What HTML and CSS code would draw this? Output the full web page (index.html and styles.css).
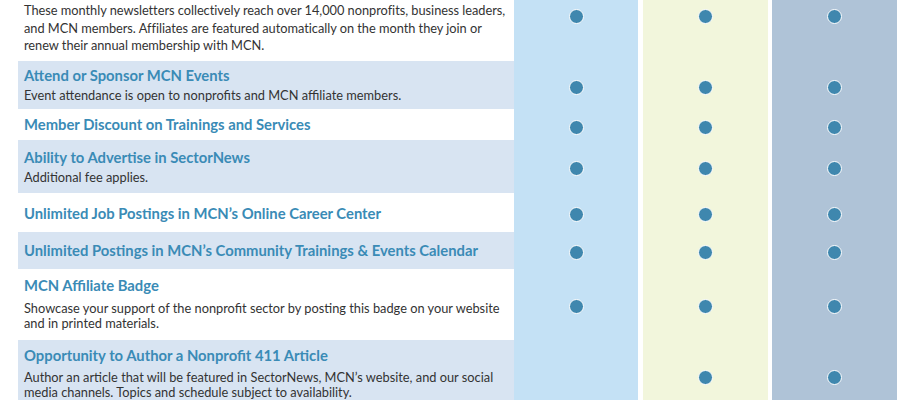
FILE: index.html
```html
<!DOCTYPE html>
<html lang="en">
<head>
<meta charset="utf-8">
<title>MCN Affiliate Benefits</title>
<link rel="stylesheet" href="styles.css">
</head>
<body>
<div class="table">
  <div class="row r1">
    <div class="feature">
      <p class="desc">These monthly newsletters collectively reach over 14,000 nonprofits, business leaders, and MCN members. Affiliates are featured automatically on the month they join or renew their annual membership with MCN.</p>
    </div>
    <div class="cell c1"><span class="dot"></span></div>
    <div class="cell c2"><span class="dot"></span></div>
    <div class="cell c3"><span class="dot"></span></div>
  </div>
  <div class="row shaded r2">
    <div class="feature">
      <h3 class="title">Attend or Sponsor MCN Events</h3>
      <p class="desc">Event attendance is open to nonprofits and MCN affiliate members.</p>
    </div>
    <div class="cell c1"><span class="dot"></span></div>
    <div class="cell c2"><span class="dot"></span></div>
    <div class="cell c3"><span class="dot"></span></div>
  </div>
  <div class="row r3">
    <div class="feature">
      <h3 class="title">Member Discount on Trainings and Services</h3>
    </div>
    <div class="cell c1"><span class="dot"></span></div>
    <div class="cell c2"><span class="dot"></span></div>
    <div class="cell c3"><span class="dot"></span></div>
  </div>
  <div class="row shaded r4">
    <div class="feature">
      <h3 class="title">Ability to Advertise in SectorNews</h3>
      <p class="desc">Additional fee applies.</p>
    </div>
    <div class="cell c1"><span class="dot"></span></div>
    <div class="cell c2"><span class="dot"></span></div>
    <div class="cell c3"><span class="dot"></span></div>
  </div>
  <div class="row r5">
    <div class="feature">
      <h3 class="title">Unlimited Job Postings in MCN’s Online Career Center</h3>
    </div>
    <div class="cell c1"><span class="dot"></span></div>
    <div class="cell c2"><span class="dot"></span></div>
    <div class="cell c3"><span class="dot"></span></div>
  </div>
  <div class="row shaded r6">
    <div class="feature">
      <h3 class="title">Unlimited Postings in MCN’s Community Trainings &amp; Events Calendar</h3>
    </div>
    <div class="cell c1"><span class="dot"></span></div>
    <div class="cell c2"><span class="dot"></span></div>
    <div class="cell c3"><span class="dot"></span></div>
  </div>
  <div class="row r7">
    <div class="feature">
      <h3 class="title">MCN Affiliate Badge</h3>
      <p class="desc tight">Showcase your support of the nonprofit sector by posting this badge on your website and in printed materials.</p>
    </div>
    <div class="cell c1"><span class="dot"></span></div>
    <div class="cell c2"><span class="dot"></span></div>
    <div class="cell c3"><span class="dot"></span></div>
  </div>
  <div class="row shaded r8">
    <div class="feature">
      <h3 class="title">Opportunity to Author a Nonprofit 411 Article</h3>
      <p class="desc tight">Author an article that will be featured in SectorNews, MCN’s website, and our social media channels. Topics and schedule subject to availability.</p>
    </div>
    <div class="cell c1"></div>
    <div class="cell c2"><span class="dot"></span></div>
    <div class="cell c3"><span class="dot"></span></div>
  </div>
</div>
</body>
</html>
```

FILE: styles.css
```css
html, body {
  margin: 0;
  padding: 0;
  background: #ffffff;
}

body {
  font-family: Lato, "Open Sans", "Liberation Sans", sans-serif;
  color: #333333;
  height: 400px;
  overflow: hidden;
}

.table {
  padding-left: 18px;
  display: flex;
  flex-direction: column;
}

.row {
  display: grid;
  grid-template-columns: 496px 124px 130px 129px;
}

.feature {
  padding: 5px 2px 6px 6px;
}

.shaded .feature {
  background: #d8e4f2;
}

.title {
  margin: 0;
  font-size: 14.8px;
  line-height: 20px;
  font-weight: 700;
  color: #3a8bb6;
}

.desc {
  margin: 2px 0 0;
  font-size: 12.8px;
  line-height: 17.5px;
  color: #333333;
}

.desc.tight {
  line-height: 15px;
  margin-top: 5px;
}

.cell {
  display: flex;
  align-items: center;
  justify-content: center;
  padding-top: 5px;
}

.c1 {
  background: #c4e1f5;
}

.c2 {
  background: #f2f6dc;
  margin-left: 5px;
}

.c3 {
  background: #afc3d7;
  margin-left: 4px;
}

.dot {
  display: block;
  width: 13px;
  height: 13px;
  border-radius: 50%;
  background: #3f87ae;
  border: 1.5px solid #ffffff;
}

/* per-row spacing */
.r1 .feature { padding-top: 2px; padding-bottom: 6px; padding-right: 0; }
.r1 .desc { margin-top: 0; letter-spacing: -0.03px; }
.r1 .cell { align-items: flex-start; padding-top: 9px; }
.r2 .feature { padding-top: 4px; padding-bottom: 5px; }
.r3 .feature { padding-top: 5px; padding-bottom: 6px; }
.r4 .feature { padding-top: 7px; padding-bottom: 6px; }
.r5 .feature { padding-top: 10px; padding-bottom: 9px; }
.r6 .feature { padding-top: 8px; padding-bottom: 9px; }
.r7 .feature { padding-top: 6px; padding-bottom: 9px; }
.r7 .desc { margin-top: 6px; }
.r8 .feature { padding-top: 5px; padding-bottom: 11px; }
```
